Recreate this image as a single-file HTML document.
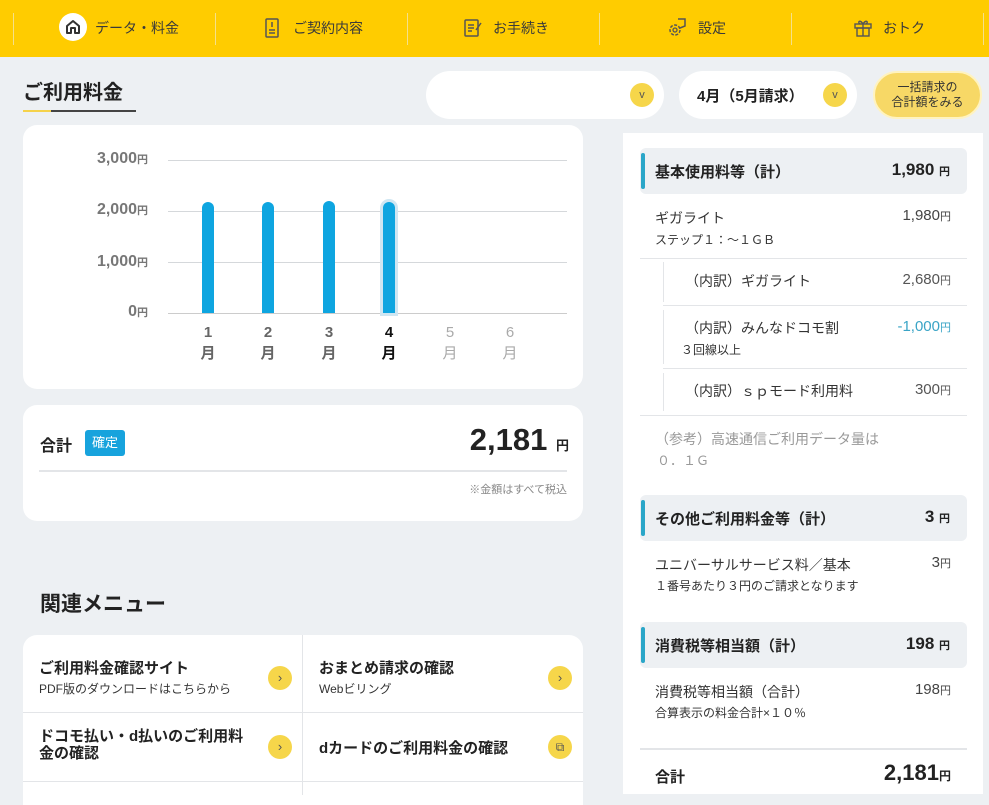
<!DOCTYPE html>
<html><head><meta charset="utf-8"><style>
*{margin:0;padding:0;box-sizing:border-box}
body{width:989px;height:794px;overflow:hidden;background:#edf0f3;font-family:"Liberation Sans","Noto Sans CJK JP",sans-serif;color:#222;position:relative}
.a{position:absolute}
.hdr{left:0;top:0;width:989px;height:57px;background:#ffcc00}
.sep{top:13px;width:1px;height:32px;background:#f5e08a}
.nav{top:18px;font-size:14px;color:#3a3a3a;display:flex;align-items:center;gap:8px}
.card{background:#fff;border-radius:14px}
.gl{left:168px;width:399px;height:1px;background:#d5d8db}
.yl{width:80px;text-align:right;font-size:16px;color:#777;font-weight:bold;left:68px}
.yl small{font-size:11px}
.bar{width:12px;background:#0ea5e0;border-radius:6px 6px 0 0;top:202px;height:111px}
.mo{width:30px;text-align:center;font-size:15px;line-height:21px;font-weight:bold;color:#666;top:322px}
.sh{left:640px;width:327px;height:46px;background:#edf0f3;border-radius:6px;font-weight:bold;font-size:15px}
.sh:before{content:"";position:absolute;left:1px;top:5px;width:4px;height:36px;background:#2aa6c8;border-radius:2px}
.sh .l{position:absolute;left:15px;top:13px}
.sh .r{position:absolute;right:17px;top:12px;font-size:17px}
.sh .r small{font-size:11px}
.t{font-size:14px;color:#333}
.s{font-size:12px;color:#333}
.p{font-size:15px;color:#444;text-align:right;right:38px}
.p small{font-size:11px}
.hl{height:1px;background:#e3e5e8}
.vl{width:1px;background:#e3e5e8}
.btn{width:24px;height:24px;border-radius:50%;background:#f6d64a;color:#555;font-size:13px;text-align:center;line-height:24px}
.mt{font-size:15px;font-weight:bold;color:#222}
</style></head><body>
<div class="a hdr"></div>
<div class="a sep" style="left:13px"></div><div class="a sep" style="left:215px"></div><div class="a sep" style="left:407px"></div><div class="a sep" style="left:599px"></div><div class="a sep" style="left:791px"></div><div class="a sep" style="left:983px"></div>
<div class="a" style="left:59px;top:13px;width:28px;height:28px;border-radius:50%;background:#fff"></div>
<svg class="a" style="left:64px;top:18px" width="18" height="18" viewBox="0 0 18 18"><path d="M3 8 L9 3 L15 8 V15 H11 V10 H7 V15 H3 Z" fill="none" stroke="#333" stroke-width="2" stroke-linejoin="round"/></svg>
<div class="a nav" style="left:95px">データ・料金</div>
<svg class="a" style="left:263px;top:18px" width="18" height="20" viewBox="0 0 18 20"><rect x="3" y="1" width="12" height="18" rx="1" fill="none" stroke="#555" stroke-width="1.5"/><path d="M9 4v5M6 12h6M6 15h6" stroke="#555" stroke-width="1.5"/></svg>
<div class="a nav" style="left:293px">ご契約内容</div>
<svg class="a" style="left:463px;top:18px" width="20" height="20" viewBox="0 0 20 20"><rect x="2" y="2" width="13" height="16" rx="1" fill="none" stroke="#555" stroke-width="1.5"/><path d="M5 7h6M5 10h6M5 13h4M13 12l5-7" stroke="#555" stroke-width="1.5"/></svg>
<div class="a nav" style="left:493px">お手続き</div>
<svg class="a" style="left:666px;top:16px" width="22" height="22" viewBox="0 0 22 22"><circle cx="9" cy="14" r="5" fill="none" stroke="#555" stroke-width="1.5" stroke-dasharray="3 1.5"/><circle cx="9" cy="14" r="2" fill="none" stroke="#555" stroke-width="1.3"/><path d="M12 3l7 0 0 7-5 2" fill="none" stroke="#555" stroke-width="1.5"/></svg>
<div class="a nav" style="left:698px">設定</div>
<svg class="a" style="left:853px;top:18px" width="20" height="20" viewBox="0 0 20 20"><rect x="2" y="6" width="16" height="4" fill="none" stroke="#555" stroke-width="1.4"/><rect x="4" y="10" width="12" height="8" fill="none" stroke="#555" stroke-width="1.4"/><path d="M10 6v12M10 6C7 1 4 4 7 6M10 6c3-5 6-2 3 0" fill="none" stroke="#555" stroke-width="1.4"/></svg>
<div class="a nav" style="left:883px">おトク</div>

<div class="a" style="left:23px;top:76px;font-size:20px;font-weight:bold;color:#222">ご利用料金</div>
<div class="a" style="left:23px;top:110px;width:113px;height:2px;background:#444"></div>
<div class="a" style="left:23px;top:110px;width:28px;height:2px;background:#f5d24a"></div>

<div class="a" style="left:426px;top:71px;width:238px;height:48px;border-radius:24px;background:#fff"></div>
<div class="a btn" style="left:630px;top:83px;font-size:11px">v</div>
<div class="a" style="left:679px;top:71px;width:178px;height:48px;border-radius:24px;background:#fff"></div>
<div class="a" style="left:697px;top:85px;font-size:15px;font-weight:bold">4月（5月請求）</div>
<div class="a btn" style="left:823px;top:83px;font-size:11px">v</div>
<div class="a" style="left:873px;top:71px;width:109px;height:48px;border-radius:24px;background:#f7d866;border:2px solid #fff3c0"></div>
<div class="a" style="left:873px;top:80px;width:109px;text-align:center;font-size:12px;line-height:15px;color:#333">一括請求の<br>合計額をみる</div>

<div class="a card" style="left:23px;top:125px;width:560px;height:264px"></div>
<div class="a gl" style="top:160px"></div><div class="a gl" style="top:211px"></div><div class="a gl" style="top:262px"></div><div class="a gl" style="top:313px;background:#ccc"></div>
<div class="a yl" style="top:150px">3,000<small>円</small></div>
<div class="a yl" style="top:201px">2,000<small>円</small></div>
<div class="a yl" style="top:253px">1,000<small>円</small></div>
<div class="a yl" style="top:303px">0<small>円</small></div>
<div class="a bar" style="left:202px"></div><div class="a bar" style="left:262px"></div><div class="a bar" style="left:323px;top:201px;height:112px"></div>
<div class="a bar" style="left:383px;box-shadow:0 0 0 3px #cfe6f2"></div>
<div class="a mo" style="left:193px">1<br>月</div><div class="a mo" style="left:253px">2<br>月</div><div class="a mo" style="left:314px">3<br>月</div><div class="a mo" style="left:374px;color:#111">4<br>月</div><div class="a mo" style="left:435px;font-weight:normal;color:#aaa">5<br>月</div><div class="a mo" style="left:495px;font-weight:normal;color:#aaa">6<br>月</div>

<div class="a card" style="left:23px;top:405px;width:560px;height:116px"></div>
<div class="a" style="left:40px;top:432px;font-size:16px;font-weight:bold">合計</div>
<div class="a" style="left:85px;top:430px;width:40px;height:26px;background:#17a3dd;border-radius:3px;color:#fff;font-size:13px;text-align:center;line-height:26px">確定</div>
<div class="a" style="right:420px;top:422px;font-size:31px;font-weight:bold;color:#222">2,181 <small style="font-size:13px">円</small></div>
<div class="a hl" style="left:39px;top:470px;width:528px;height:2px"></div>
<div class="a" style="right:422px;top:481px;font-size:11px;color:#888">※金額はすべて税込</div>

<div class="a" style="left:40px;top:588px;font-size:21px;font-weight:bold">関連メニュー</div>
<div class="a card" style="left:23px;top:635px;width:560px;height:170px;border-radius:14px 14px 0 0"></div>
<div class="a vl" style="left:302px;top:635px;height:160px"></div>
<div class="a hl" style="left:23px;top:712px;width:560px"></div>
<div class="a hl" style="left:23px;top:781px;width:560px"></div>
<div class="a mt" style="left:39px;top:657px">ご利用料金確認サイト</div>
<div class="a s" style="left:39px;top:680px">PDF版のダウンロードはこちらから</div>
<div class="a btn" style="left:268px;top:666px">›</div>
<div class="a mt" style="left:319px;top:657px">おまとめ請求の確認</div>
<div class="a s" style="left:319px;top:680px">Webビリング</div>
<div class="a btn" style="left:548px;top:666px">›</div>
<div class="a mt" style="left:39px;top:728px;line-height:17px">ドコモ払い・d払いのご利用料<br>金の確認</div>
<div class="a btn" style="left:268px;top:735px">›</div>
<div class="a mt" style="left:319px;top:737px">dカードのご利用料金の確認</div>
<div class="a btn" style="left:548px;top:735px;font-size:12px">⧉</div>

<div class="a" style="left:623px;top:133px;width:360px;height:661px;background:#fff"></div>
<div class="a sh" style="top:148px"><span class="l">基本使用料等（計）</span><span class="r">1,980 <small>円</small></span></div>
<div class="a t" style="left:655px;top:208px">ギガライト</div>
<div class="a s" style="left:655px;top:231px">ステップ１：～１ＧＢ</div>
<div class="a p" style="top:207px;font-weight:normal">1,980<small>円</small></div>
<div class="a hl" style="left:640px;top:258px;width:327px"></div>
<div class="a vl" style="left:663px;top:262px;height:40px"></div>
<div class="a t" style="left:685px;top:271px">（内訳）ギガライト</div>
<div class="a p" style="top:271px;color:#555">2,680<small>円</small></div>
<div class="a hl" style="left:663px;top:305px;width:304px"></div>
<div class="a vl" style="left:663px;top:310px;height:54px"></div>
<div class="a t" style="left:685px;top:318px">（内訳）みんなドコモ割</div>
<div class="a s" style="left:681px;top:341px">３回線以上</div>
<div class="a p" style="top:318px;color:#3aa4c6">-1,000<small>円</small></div>
<div class="a hl" style="left:663px;top:368px;width:304px"></div>
<div class="a vl" style="left:663px;top:373px;height:38px"></div>
<div class="a t" style="left:685px;top:381px">（内訳）ｓｐモード利用料</div>
<div class="a p" style="top:381px;color:#555">300<small>円</small></div>
<div class="a hl" style="left:640px;top:415px;width:327px"></div>
<div class="a t" style="left:655px;top:429px;color:#999">（参考）高速通信ご利用データ量は</div>
<div class="a t" style="left:657px;top:450px;color:#999;font-size:13px">０．１Ｇ</div>

<div class="a sh" style="top:495px"><span class="l">その他ご利用料金等（計）</span><span class="r">3 <small>円</small></span></div>
<div class="a t" style="left:655px;top:555px">ユニバーサルサービス料／基本</div>
<div class="a s" style="left:655px;top:577px">１番号あたり３円のご請求となります</div>
<div class="a p" style="top:554px">3<small>円</small></div>
<div class="a sh" style="top:622px"><span class="l">消費税等相当額（計）</span><span class="r">198 <small>円</small></span></div>
<div class="a t" style="left:655px;top:682px">消費税等相当額（合計）</div>
<div class="a s" style="left:655px;top:704px">合算表示の料金合計×１０％</div>
<div class="a p" style="top:681px">198<small>円</small></div>
<div class="a hl" style="left:640px;top:748px;width:327px;height:2px"></div>
<div class="a" style="left:655px;top:766px;font-size:15px;font-weight:bold">合計</div>
<div class="a" style="right:38px;top:760px;font-size:22px;font-weight:bold">2,181<small style="font-size:12px">円</small></div>
</body></html>
